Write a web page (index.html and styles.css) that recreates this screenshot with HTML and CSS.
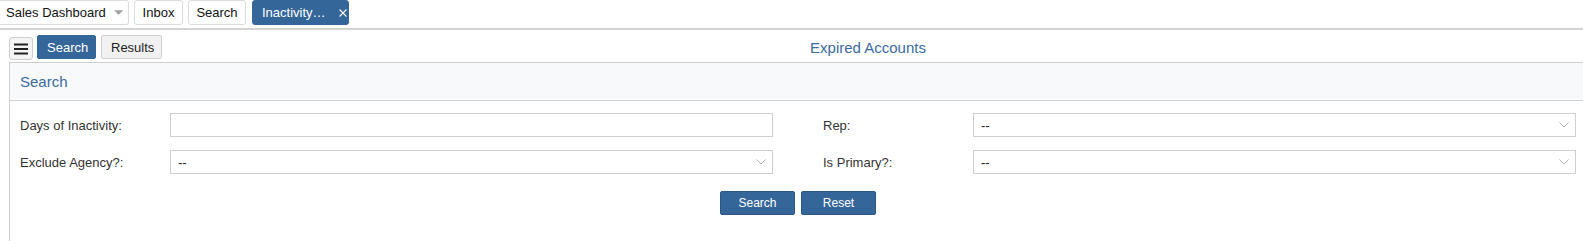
FILE: index.html
```html
<!DOCTYPE html>
<html>
<head>
<meta charset="utf-8">
<link rel="stylesheet" href="styles.css">
</head>
<body>
<div class="tabbar">
  <div class="tab tab-first">Sales Dashboard <svg class="caret" width="10" height="5" viewBox="0 0 10 5"><path d="M0 0 L10 0 L5 5 Z" fill="#a0a0a0"/></svg></div>
  <div class="tab tab-inbox">Inbox</div>
  <div class="tab tab-search">Search</div>
  <div class="tab tab-active"><span class="tab-label">Inactivity…</span><svg class="close" width="8" height="8" viewBox="0 0 8 8"><path d="M0.5 0.5 L7.5 7.5 M7.5 0.5 L0.5 7.5" stroke="#fff" stroke-width="1.1"/></svg></div>
</div>
<div class="divider"></div>
<div class="toolbar">
  <button class="menu-btn"><svg width="14" height="12" viewBox="0 0 14 12"><path d="M0 1.5 H14 M0 6 H14 M0 10.5 H14" stroke="#222" stroke-width="2"/></svg></button>
  <button class="tbtn tbtn-primary">Search</button>
  <button class="tbtn">Results</button>
  <div class="page-title">Expired Accounts</div>
</div>
<div class="panel">
  <div class="panel-head">Search</div>
  <div class="panel-body">
    <div class="form-grid">
      <div class="field">
        <label class="label">Days of Inactivity:</label>
        <div class="input"></div>
      </div>
      <div class="field">
        <label class="label">Rep:</label>
        <div class="input select"><span>--</span><svg width="10" height="6" viewBox="0 0 10 6"><path d="M0.5 0.5 L5 5 L9.5 0.5" fill="none" stroke="#b3b3b3" stroke-width="1"/></svg></div>
      </div>
      <div class="field">
        <label class="label">Exclude Agency?:</label>
        <div class="input select"><span>--</span><svg width="10" height="6" viewBox="0 0 10 6"><path d="M0.5 0.5 L5 5 L9.5 0.5" fill="none" stroke="#b3b3b3" stroke-width="1"/></svg></div>
      </div>
      <div class="field">
        <label class="label">Is Primary?:</label>
        <div class="input select"><span>--</span><svg width="10" height="6" viewBox="0 0 10 6"><path d="M0.5 0.5 L5 5 L9.5 0.5" fill="none" stroke="#b3b3b3" stroke-width="1"/></svg></div>
      </div>
    </div>
    <div class="actions">
      <button class="abtn">Search</button>
      <button class="abtn">Reset</button>
    </div>
  </div>
</div>
</body>
</html>
```
FILE: styles.css
```css
html, body {
  margin: 0;
  padding: 0;
  overflow: hidden;
  background: #fff;
  font-family: "Liberation Sans", Arial, sans-serif;
  color: #333;
}
.tabbar {
  display: flex;
  gap: 5px;
  height: 25px;
}
.tab {
  box-sizing: border-box;
  height: 25px;
  border: 1px solid #dcdcdc;
  border-radius: 3px;
  background: #fff;
  padding: 0;
  font-size: 13px;
  line-height: 23px;
  color: #111;
  display: flex;
  align-items: center;
  justify-content: center;
  white-space: nowrap;
}
.tab-first {
  border-left: none;
  border-top-left-radius: 0;
  border-bottom-left-radius: 0;
  justify-content: flex-start;
  padding: 0 5px 0 6px;
  width: 129px;
}
.tab-inbox {
  width: 49px;
}
.tab-search {
  width: 58px;
}
.caret {
  margin-left: 8px;
}
.tab-active {
  background: #346699;
  border-color: #346699;
  color: #fff;
  margin-left: 1px;
  width: 97px;
  justify-content: flex-start;
  padding: 0 0 0 9px;
}
.tab-label {
  width: 77px;
}
.divider {
  margin-top: 3px;
  height: 2px;
  background: #d3d3d3;
}
.toolbar {
  display: flex;
  align-items: center;
  padding: 5px 8px 0 9px;
  height: 24px;
}
.menu-btn {
  box-sizing: border-box;
  width: 24px;
  height: 23px;
  margin-top: 3px;
  border: 1px solid #cfcfcf;
  border-radius: 3px;
  background: #f4f4f4;
  padding: 0;
  display: flex;
  align-items: center;
  justify-content: center;
  margin-right: 4px;
}
.tbtn {
  box-sizing: border-box;
  height: 24px;
  border: 1px solid #d0d0d0;
  border-radius: 2px;
  background: #f1f1f1;
  color: #222;
  font-family: inherit;
  font-size: 13px;
  padding: 0 9px;
  margin-right: 5px;
  width: 61px;
}
.tbtn-primary {
  background: #346699;
  border-color: #346699;
  color: #fff;
  width: 59px;
}
.page-title {
  flex: 1;
  text-align: center;
  font-size: 15px;
  color: #3a6b9f;
  padding-right: 6px;
  margin-top: 1px;
}
.panel {
  margin: 3px -4px 0 9px;
  border: 1px solid #cfcfcf;
  border-bottom: none;
  height: 180px;
}
.panel-head {
  height: 37px;
  background: #f8f9fb;
  border-bottom: 1px solid #d3d3d3;
  color: #3a6b9f;
  font-size: 15px;
  line-height: 37px;
  padding-left: 10px;
}
.panel-body {
  padding: 12px 12px 0 10px;
}
.form-grid {
  width: 1556px;
  display: grid;
  grid-template-columns: 1fr 1fr;
  column-gap: 50px;
  row-gap: 13px;
}
.field {
  display: grid;
  grid-template-columns: 150px 1fr;
  align-items: center;
}
.label {
  font-size: 13px;
  color: #333;
}
.input {
  box-sizing: border-box;
  height: 24px;
  border: 1px solid #cfcfcf;
  background: #fff;
  font-size: 13px;
  color: #222;
}
.select {
  display: flex;
  align-items: center;
  justify-content: space-between;
  padding: 0 6px 0 7px;
}
.actions {
  width: 1556px;
  display: flex;
  justify-content: center;
  gap: 6px;
  margin-top: 17px;
}
.abtn {
  box-sizing: border-box;
  width: 75px;
  height: 24px;
  border: 1px solid #2b5783;
  border-radius: 2px;
  background: #346699;
  color: #fff;
  font-family: inherit;
  font-size: 12px;
  padding: 0;
}
```
